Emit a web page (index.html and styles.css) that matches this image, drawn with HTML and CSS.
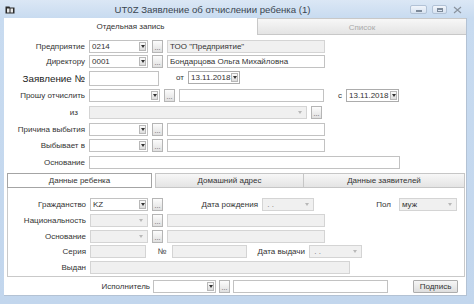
FILE: index.html
```html
<!doctype html>
<html lang="ru">
<head>
    <meta charset="UTF-8">
    <title>UT0Z</title>
    <link rel="stylesheet" href="styles.css">
</head>
<body>
<div class="window">
    <div class="titlebar">
        <svg class="title-icon" width="10" height="9" viewBox="0 0 10 9">
            <path d="M0.5 1.5h4l0.5 1h4.5v6h-9z" fill="#2b2b2b"/>
            <path d="M2 3.5h2.5v4h-2.5z M5.5 3.5h2.5v4h-2.5z" fill="#e8e8e8"/>
        </svg>
        <div class="title">UT0Z Заявление об отчислении ребенка (1)</div>
        <div class="wbuttons">
            <span class="wb wb-min"><i></i></span>
            <span class="wb wb-max"><i></i></span>
            <svg class="wb-close" width="9" height="8" viewBox="0 0 9 8">
                <path d="M1 1l7 6M8 1l-7 6" stroke="#8a939e" stroke-width="1.2" fill="none"/>
            </svg>
        </div>
    </div>

    <div class="client">
        <div class="tabs">
            <div class="tab active">Отдельная запись</div>
            <div class="tab">Список</div>
        </div>

        <div class="page">
            <div class="row h15">
                <div class="lbl">Предприятие</div>
                <div class="field combo w59"><span>0214</span><span class="arr"></span></div>
                <div class="dots">...</div>
                <div class="field off w158">ТОО "Предприятие"</div>
            </div>
            <div class="row h16">
                <div class="lbl">Директору</div>
                <div class="field combo w59"><span>0001</span><span class="arr"></span></div>
                <div class="dots">...</div>
                <div class="field w158">Бондарцова Ольга Михайловна</div>
            </div>
            <div class="row h18">
                <div class="lbl big">Заявление №</div>
                <div class="field tall w70"></div>
                <div class="lbl-s w21">от</div>
                <div class="field combo w52 date"><span>13.11.2018</span><span class="arr"></span></div>
            </div>
            <div class="row">
                <div class="lbl">Прошу отчислить</div>
                <div class="field combo w71"><span></span><span class="arr"></span></div>
                <div class="dots">...</div>
                <div class="field w145"></div>
                <div class="lbl-s w14">с</div>
                <div class="field combo w53 date"><span>13.11.2018</span><span class="arr"></span></div>
            </div>
            <div class="row">
                <div class="lbl lbl-iz">из</div>
                <div class="field combo off w218"><span></span><span class="arr"></span></div>
                <div class="dots">...</div>
            </div>
            <div class="row h16">
                <div class="lbl">Причина выбытия</div>
                <div class="field combo w59"><span></span><span class="arr"></span></div>
                <div class="dots">...</div>
                <div class="field w158"></div>
            </div>
            <div class="row">
                <div class="lbl">Выбывает в</div>
                <div class="field combo w59"><span></span><span class="arr"></span></div>
                <div class="dots">...</div>
                <div class="field w158"></div>
            </div>
            <div class="row">
                <div class="lbl">Основание</div>
                <div class="field w311"></div>
            </div>

            <div class="subtabs">
                <div class="stab active">Данные ребенка</div>
                <div class="stab second">Домашний адрес</div>
                <div class="stab third">Данные заявителей</div>
            </div>

            <div class="group">
                <div class="row h16">
                    <div class="lbl">Гражданство</div>
                    <div class="field combo w58"><span>KZ</span><span class="arr"></span></div>
                    <div class="dots">...</div>
                    <div class="lbl-s w91">Дата рождения</div>
                    <div class="field combo off w52"><span class="ph">&nbsp;. .</span><span class="arr"></span></div>
                    <div class="lbl-s w77">Пол</div>
                    <div class="field combo off w58"><span>муж</span><span class="arr"></span></div>
                </div>
                <div class="row h16">
                    <div class="lbl">Национальность</div>
                    <div class="field combo off w58"><span></span><span class="arr"></span></div>
                    <div class="dots">...</div>
                    <div class="field off w158"></div>
                </div>
                <div class="row h15">
                    <div class="lbl">Основание</div>
                    <div class="field combo off w58"><span></span><span class="arr"></span></div>
                    <div class="dots">...</div>
                    <div class="field off w158"></div>
                </div>
                <div class="row h16">
                    <div class="lbl">Серия</div>
                    <div class="field off w56"></div>
                    <div class="lbl-s w18">№</div>
                    <div class="field off w75"></div>
                    <div class="lbl-s w54">Дата выдачи</div>
                    <div class="field combo off w53"><span class="ph">&nbsp;. .</span><span class="arr"></span></div>
                </div>
                <div class="row h13">
                    <div class="lbl">Выдан</div>
                    <div class="field off w260"></div>
                </div>
            </div>

            <div class="footer">
                <div class="lbl-s w146">Исполнитель</div>
                <div class="field combo w63"><span></span><span class="arr"></span></div>
                <div class="dots">...</div>
                <div class="field w155"></div>
                <div class="button">Подпись</div>
            </div>
        </div>
    </div>
</div>
</body>
</html>
```

FILE: styles.css
```css
* {margin: 0; padding: 0; box-sizing: border-box;}
body {width: 474px; height: 304px; overflow: hidden; background: #c2d6ed; font: 8px "Liberation Sans", Arial, sans-serif; color: #333;}

.window {width: 474px; height: 304px; background: linear-gradient(#dbe7f5, #c8dbf0 18px, #c2d6ed);}

/* title bar */
.titlebar {height: 18px; display: flex; align-items: center; padding-left: 5px;}
.title-icon {display: block;}
.title {flex: 1; text-align: center; font-size: 9.6px; color: #3a4550; padding-top: 1px;}
.wbuttons {display: flex; align-items: center; margin-right: 12px; padding-top: 1px;}
.wb {display: flex; align-items: center; justify-content: center; height: 9px; border: 1px solid #b2c2d6; border-radius: 2px; background: linear-gradient(#f1f5fb, #d7e2f0);}
.wb-min {width: 17px; margin-right: 5px;}
.wb-min i {width: 6px; height: 2px; background: #7d8a9a; margin-top: 3px;}
.wb-max {width: 15px; margin-right: 6px;}
.wb-max i {width: 6px; height: 4px; border: 1px solid #7d8a9a; border-top-width: 2px;}
.wb-close {display: block;}

/* client area */
.client {margin-left: 4px; width: 463px; height: 278px; background: #fff; border-right: 1px solid #b3c2d4; border-bottom: 1px solid #b3c2d4;}
.tabs {display: flex; height: 17px;}
.tab {text-align: center; line-height: 16px;}
.tab.active {width: 253px; padding-top: 1px;}
.tab:not(.active) {flex: 1; background: linear-gradient(#f7f7f7, #e4e4e4); border: 1px solid #c8c8c8; border-right: none; color: #aaa; line-height: 17px;}

.page {padding-top: 5px;}
.row {display: flex; align-items: flex-start; gap: 4px; height: 17px;}
.h13 {height: 13px;}
.h15 {height: 15px;}
.h16 {height: 16px;}
.h18 {height: 18px;}

.lbl {width: 81px; text-align: right; line-height: 13px; white-space: nowrap;}
.lbl.big {font-size: 9.8px; line-height: 15px; color: #222;}
.lbl-iz {padding-right: 7px;}
.lbl-s {text-align: right; line-height: 13px; white-space: nowrap;}
.group .lbl {width: 78px;}

.field {height: 13px; border: 1px solid #c2c2c2; background: #fff; padding-left: 2px; line-height: 11px; white-space: nowrap; overflow: hidden;}
.field.off {background: #f0f0f0; border-color: #d4d4d4;}
.field.tall {height: 15px;}
.date {border-color: #acacac;}
.combo {display: flex; align-items: center; justify-content: space-between; padding-right: 1px;}
.arr {display: flex; align-items: center; justify-content: center; width: 7px; height: 9px; border: 1px solid #b8b8b8; background: linear-gradient(#fbfbfb, #dcdcdc); flex-shrink: 0;}
.arr::after {content: ""; border-top: 3px solid #333; border-left: 2px solid transparent; border-right: 2px solid transparent;}
.combo.off .arr {border: none; background: none; margin-right: 2px;}
.combo.off .arr::after {border-top-color: #b8b8b8;}
.ph {color: #777;}

.dots {width: 11px; height: 13px; border: 1px solid #b5b5b5; background: linear-gradient(#fcfcfc, #e0e0e0); font-size: 7px; line-height: 14px; text-align: center; color: #555;}

.w14 {width: 14px;}
.w18 {width: 18px; padding-right: 2px;}
.w21 {width: 21px;}
.w52 {width: 52px;}
.w53 {width: 53px;}
.w54 {width: 54px;}
.w56 {width: 56px;}
.w58 {width: 58px;}
.w59 {width: 59px;}
.w63 {width: 63px;}
.w70 {width: 70px;}
.w71 {width: 71px;}
.w75 {width: 75px;}
.w77 {width: 77px; padding-right: 4px;}
.w91 {width: 91px;}
.w145 {width: 145px;}
.w146 {width: 146px;}
.w155 {width: 155px;}
.w158 {width: 158px;}
.w218 {width: 218px;}
.w260 {width: 260px;}
.w311 {width: 311px;}

/* lower tabs */
.subtabs {display: flex; height: 15px; margin-left: 3px;}
.stab {text-align: center; line-height: 14px; border: 1px solid #c6c6c6; background: linear-gradient(#f7f7f7, #e4e4e4);}
.stab.active {width: 145px; background: #fff; border-color: #a4a4a4;}
.stab.second {width: 149px; margin-left: 3px;}
.stab.third {width: 161px; border-left: none;}

.group {margin-left: 3px; width: 458px; height: 89px; border: 1px solid #c9c9c9; border-top: none; padding-top: 10px;}

.footer {display: flex; align-items: center; gap: 3px; height: 18px;}
.button {width: 45px; height: 13px; margin-left: 22px; border: 1px solid #acacac; border-radius: 1px; background: linear-gradient(#f6f6f6, #dedede); text-align: center; line-height: 11px;}
```
